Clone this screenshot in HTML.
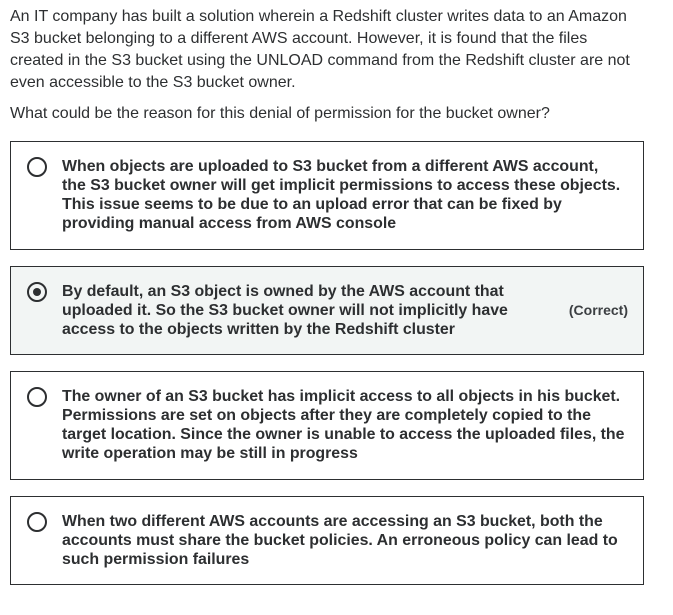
<!DOCTYPE html>
<html><head><style>
body{margin:0;background:#fff;font-family:"Liberation Sans",sans-serif;color:#2d2f31;width:673px;height:615px;overflow:hidden}
.q{position:absolute;left:10px;top:6px;width:660px;font-size:16px;line-height:22px;white-space:nowrap}
.q p{margin:0 0 9px}
.box{position:absolute;left:10px;width:634px;border:1px solid #2d2f31;box-sizing:border-box}
.box.c{background:#f2f5f4}
.t{position:absolute;left:51px;font-weight:bold;font-size:15.9px;line-height:19px;color:#2d2f31;white-space:nowrap}
.r{position:absolute;left:16px;width:20px;height:20px;border:2px solid #2d2f31;border-radius:50%;box-sizing:border-box}
.r.s::after{content:"";position:absolute;left:4px;top:4px;width:8px;height:8px;border-radius:50%;background:#2d2f31}
.cor{position:absolute;right:15px;font-weight:bold;font-size:14px;color:#3c3f42}
</style></head><body>
<div class="q"><p>An IT company has built a solution wherein a Redshift cluster writes data to an Amazon<br>S3 bucket belonging to a different AWS account. However, it is found that the files<br>created in the S3 bucket using the UNLOAD command from the Redshift cluster are not<br>even accessible to the S3 bucket owner.</p><p>What could be the reason for this denial of permission for the bucket owner?</p></div>

<div class="box" style="top:141px;height:109px"><div class="r" style="top:15px"></div><div class="t" style="top:15px">When objects are uploaded to S3 bucket from a different AWS account,<br>the S3 bucket owner will get implicit permissions to access these objects.<br>This issue seems to be due to an upload error that can be fixed by<br>providing manual access from AWS console</div></div>

<div class="box c" style="top:266px;height:89px"><div class="r s" style="top:15px"></div><div class="t" style="top:15px">By default, an S3 object is owned by the AWS account that<br>uploaded it. So the S3 bucket owner will not implicitly have<br>access to the objects written by the Redshift cluster</div><div class="cor" style="top:35px">(Correct)</div></div>

<div class="box" style="top:371px;height:109px"><div class="r" style="top:15px"></div><div class="t" style="top:15px">The owner of an S3 bucket has implicit access to all objects in his bucket.<br>Permissions are set on objects after they are completely copied to the<br>target location. Since the owner is unable to access the uploaded files, the<br>write operation may be still in progress</div></div>

<div class="box" style="top:496px;height:89px"><div class="r" style="top:15px"></div><div class="t" style="top:15px">When two different AWS accounts are accessing an S3 bucket, both the<br>accounts must share the bucket policies. An erroneous policy can lead to<br>such permission failures</div></div>
</body></html>
